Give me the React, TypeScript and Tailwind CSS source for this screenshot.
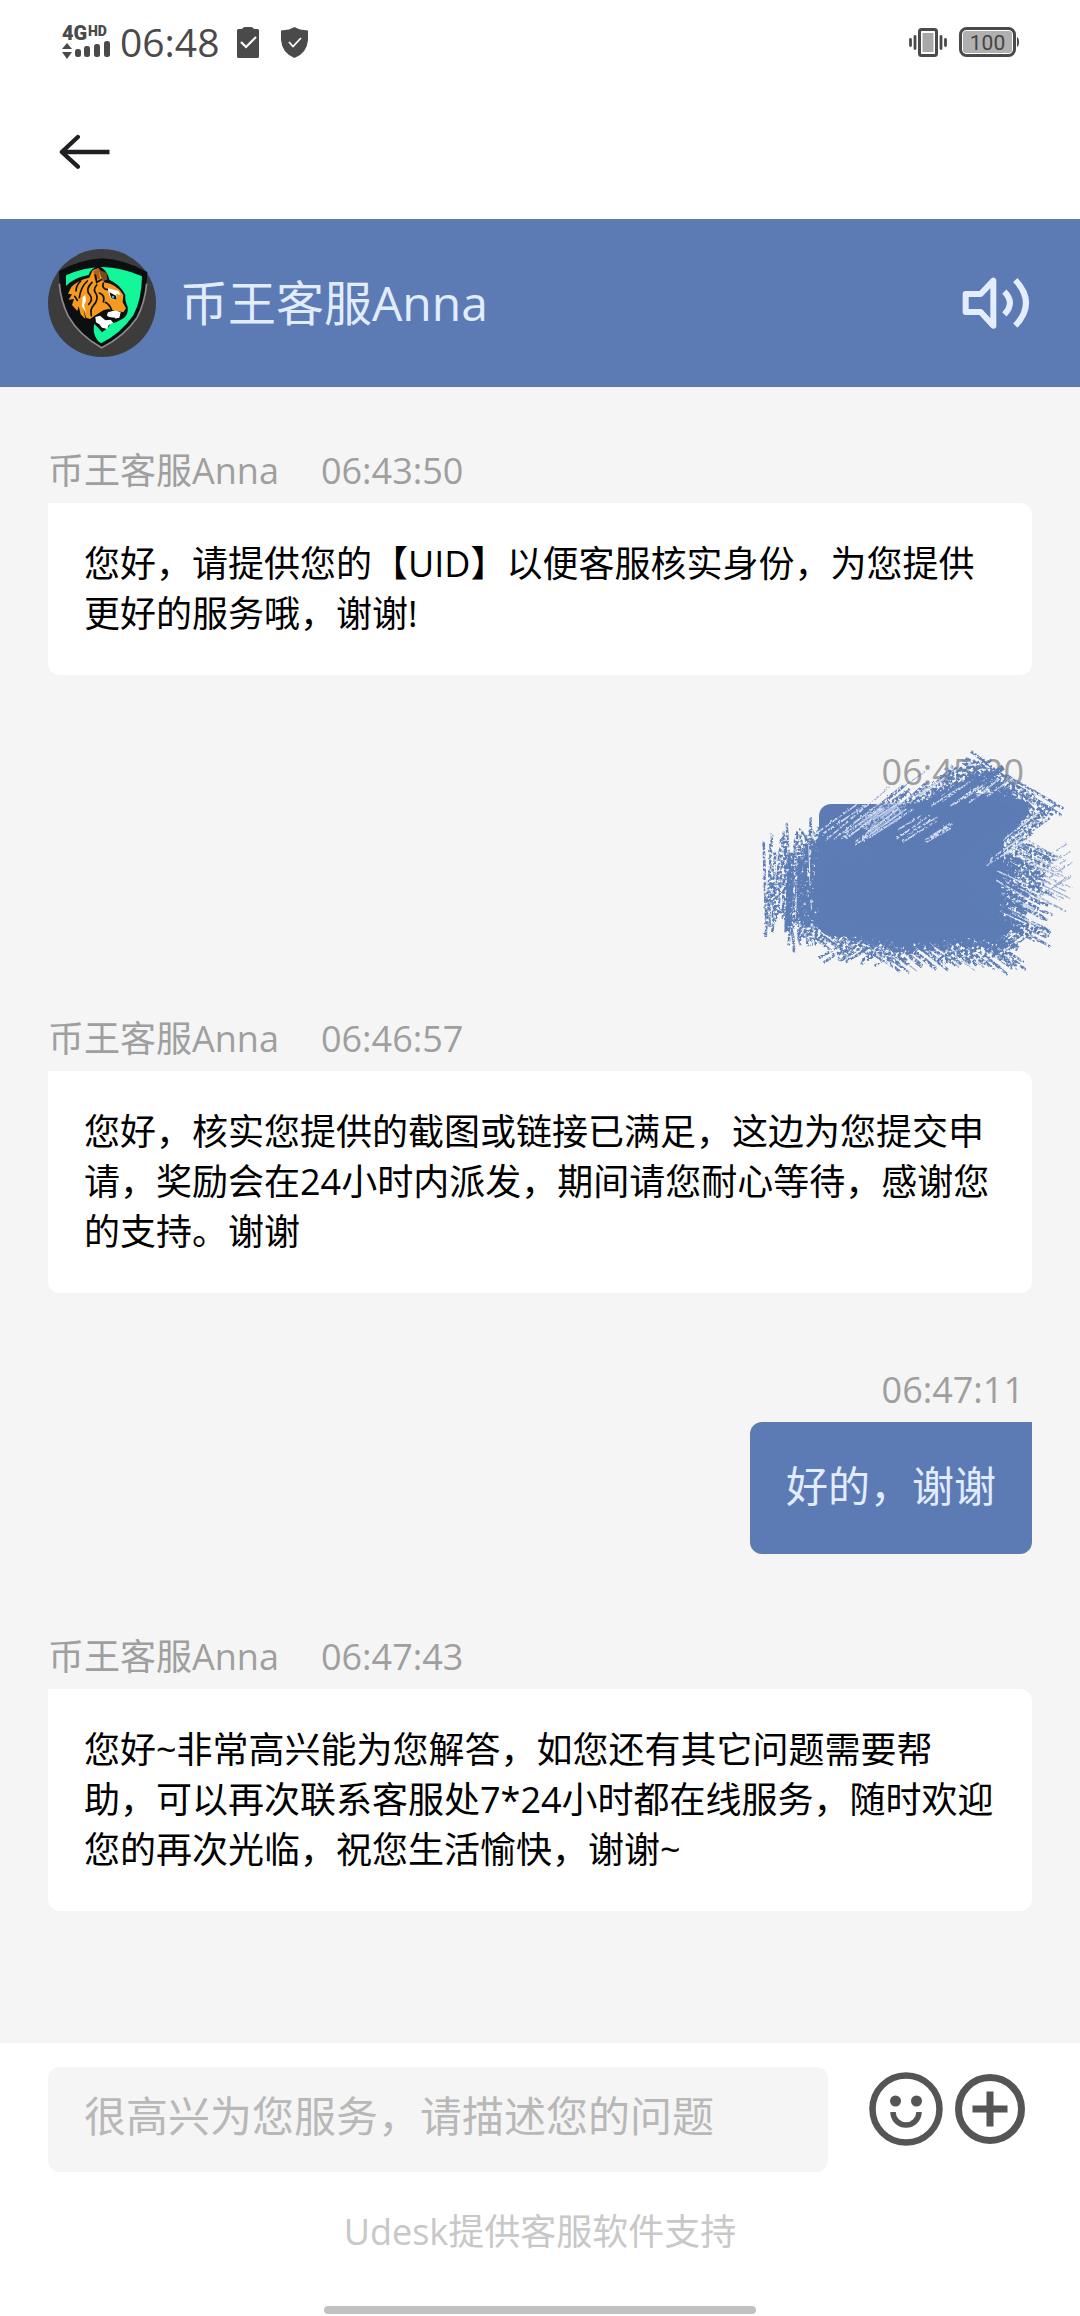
import React from "react";

type Message = { from: "agent" | "user"; time: string; text: string };

const AGENT = "币王客服Anna";

const MESSAGES: Message[] = [
  { from: "agent", time: "06:43:50", text: "您好，请提供您的【UID】以便客服核实身份，为您提供更好的服务哦，谢谢!" },
  { from: "user", time: "06:45:20", text: "" },
  {
    from: "agent",
    time: "06:46:57",
    text: "您好，核实您提供的截图或链接已满足，这边为您提交申请，奖励会在24小时内派发，期间请您耐心等待，感谢您的支持。谢谢",
  },
  { from: "user", time: "06:47:11", text: "好的，谢谢" },
  {
    from: "agent",
    time: "06:47:43",
    text: "您好~非常高兴能为您解答，如您还有其它问题需要帮助，可以再次联系客服处7*24小时都在线服务，随时欢迎您的再次光临，祝您生活愉快，谢谢~",
  },
];

function makeRandom(seed: number) {
  let s = seed;
  return () => {
    s = (s * 16807) % 2147483647;
    return s / 2147483647;
  };
}

type Band = {
  from: [number, number];
  to: [number, number];
  angle: number;
  length: number;
  count: number;
  spread: number;
};

function strokes(bands: Band[], seed: number) {
  const rnd = makeRandom(seed);
  let d = "";
  for (const b of bands) {
    for (let i = 0; i < b.count; i++) {
      const t = (i + rnd() * 0.6) / b.count;
      const cx = b.from[0] + (b.to[0] - b.from[0]) * t + (rnd() - 0.5) * b.spread;
      const cy = b.from[1] + (b.to[1] - b.from[1]) * t + (rnd() - 0.5) * b.spread;
      const a = ((b.angle + (rnd() - 0.5) * 8) * Math.PI) / 180;
      const l = (b.length * (0.7 + rnd() * 0.5)) / 2;
      const dx = Math.cos(a) * l;
      const dy = Math.sin(a) * l;
      d += `M${(cx - dx).toFixed(0)} ${(cy - dy).toFixed(0)}L${(cx + dx).toFixed(0)} ${(cy + dy).toFixed(0)}`;
    }
  }
  return d;
}

const BODY = strokes(
  [
    { from: [150, 480], to: [260, 460], angle: 90, length: 220, count: 12, spread: 20 },
    { from: [560, 230], to: [720, 160], angle: -38, length: 150, count: 16, spread: 20 },
    { from: [760, 160], to: [820, 230], angle: 33, length: 130, count: 8, spread: 20 },
    { from: [790, 290], to: [720, 380], angle: -38, length: 200, count: 12, spread: 20 },
    { from: [760, 360], to: [770, 590], angle: 28, length: 180, count: 20, spread: 20 },
    { from: [220, 580], to: [460, 630], angle: 32, length: 130, count: 18, spread: 16 },
    { from: [460, 630], to: [800, 620], angle: 36, length: 110, count: 22, spread: 16 },
    { from: [230, 370], to: [400, 350], angle: 50, length: 110, count: 14, spread: 16 },
  ],
  512,
);

const EDGE = strokes(
  [
    { from: [330, 290], to: [450, 230], angle: -36, length: 220, count: 9, spread: 24 },
    { from: [450, 260], to: [620, 170], angle: -38, length: 240, count: 18, spread: 30 },
    { from: [600, 170], to: [690, 170], angle: -38, length: 220, count: 14, spread: 30 },
    { from: [800, 140], to: [720, 190], angle: 33, length: 230, count: 14, spread: 20 },
    { from: [880, 185], to: [840, 215], angle: 30, length: 190, count: 5, spread: 24 },
    { from: [850, 280], to: [740, 400], angle: -36, length: 230, count: 26, spread: 30 },
    { from: [820, 330], to: [810, 600], angle: 27, length: 240, count: 40, spread: 30 },
    { from: [790, 420], to: [800, 540], angle: -34, length: 180, count: 14, spread: 40 },
    { from: [76, 460], to: [200, 480], angle: 92, length: 270, count: 18, spread: 24 },
    { from: [140, 480], to: [250, 460], angle: 88, length: 330, count: 14, spread: 30 },
    { from: [210, 350], to: [360, 340], angle: 50, length: 120, count: 16, spread: 20 },
    { from: [170, 590], to: [440, 660], angle: 34, length: 180, count: 26, spread: 26 },
    { from: [300, 650], to: [560, 645], angle: -34, length: 160, count: 18, spread: 24 },
    { from: [420, 655], to: [800, 650], angle: 38, length: 190, count: 28, spread: 26 },
    { from: [640, 650], to: [840, 630], angle: -38, length: 160, count: 16, spread: 20 },
  ],
  77,
);

const FAINT = strokes(
  [
    { from: [380, 220], to: [470, 190], angle: -38, length: 190, count: 6, spread: 30 },
    { from: [890, 350], to: [910, 520], angle: 26, length: 160, count: 16, spread: 30 },
    { from: [930, 370], to: [930, 480], angle: -34, length: 120, count: 9, spread: 30 },
    { from: [400, 680], to: [800, 680], angle: 36, length: 110, count: 10, spread: 20 },
  ],
  901,
);

const GAPS = strokes(
  [
    { from: [290, 270], to: [450, 285], angle: -36, length: 160, count: 13, spread: 16 },
    { from: [510, 280], to: [620, 310], angle: -32, length: 110, count: 9, spread: 30 },
    { from: [800, 370], to: [860, 290], angle: -36, length: 130, count: 5, spread: 24 },
    { from: [560, 190], to: [800, 180], angle: -36, length: 90, count: 10, spread: 40 },
    { from: [810, 440], to: [870, 600], angle: 27, length: 110, count: 8, spread: 30 },
  ],
  313,
);

function Scribble() {
  return (
    <svg
      viewBox="0 0 1020 780"
      className="pointer-events-none absolute -top-[18px] -right-12 h-[260px] w-[340px]"
      aria-hidden="true"
    >
      <defs>
        <filter id="crayon" x="0" y="0" width="1020" height="780" filterUnits="userSpaceOnUse">
          <feTurbulence type="fractalNoise" baseFrequency="0.12" numOctaves="2" seed="4" result="noise" />
          <feColorMatrix in="noise" type="matrix" values="0 0 0 0 0  0 0 0 0 0  0 0 0 0 0  0 0 0 5 -1.75" result="grain" />
          <feDisplacementMap in="SourceGraphic" in2="noise" scale="8" result="rough" />
          <feComposite in="rough" in2="grain" operator="in" />
        </filter>
        <filter id="wax" x="0" y="0" width="1020" height="780" filterUnits="userSpaceOnUse">
          <feTurbulence type="fractalNoise" baseFrequency="0.1" numOctaves="2" seed="9" result="noise" />
          <feColorMatrix in="noise" type="matrix" values="0 0 0 0 0  0 0 0 0 0  0 0 0 0 0  0 0 0 5 -1.2" result="grain" />
          <feComposite in="SourceGraphic" in2="grain" operator="in" />
        </filter>
      </defs>
      <path
        d="M250 350L340 330L420 330L500 250L540 215L640 190L760 190L860 225L870 250L780 330L700 400L715 500L780 560L820 590L800 615L620 630L500 640L340 615L250 570L220 510L225 400Z"
        fill="#5c7bb5"
      />
      <path d={FAINT} stroke="#5c7bb5" strokeWidth="4" strokeOpacity="0.6" filter="url(#crayon)" />
      <path d="M340 275L440 215L500 218L480 270L400 315Z" fill="#c3d2ec" fillOpacity="0.8" />
      <path d={BODY} stroke="#5c7bb5" strokeWidth="16" filter="url(#wax)" />
      <path d={EDGE} stroke="#5c7bb5" strokeWidth="8" filter="url(#crayon)" />
      <path d={GAPS} stroke="#e6eefa" strokeWidth="5" strokeOpacity="0.85" filter="url(#crayon)" />
    </svg>
  );
}

function TigerAvatar() {
  return (
    <svg viewBox="24 26 324 324" className="size-27 shrink-0" role="img" aria-label={AGENT}>
      <circle cx="186" cy="188" r="162" fill="#3c3c3c" />
      <path
        d="M57 92Q120 58 186 54Q255 58 322 95Q320 180 291 232Q252 288 185 322Q118 286 84 226Q57 172 57 92Z"
        fill="#0c0f10"
      />
      <path d="M58 130Q62 180 84 226Q118 286 185 322Q252 288 291 232Q314 190 320 130" fill="none" stroke="#8d8a8f" strokeWidth="5" />
      <path
        d="M78 105Q130 81 186 80Q250 82 306 108Q305 178 280 225Q240 282 183 309Q162 296 160 262L165 225L110 130L78 136Z"
        fill="#12f79a"
      />
      <path
        d="M76 140Q98 112 146 104Q152 84 175 77Q201 86 208 118Q240 132 256 164Q254 180 263 200Q266 226 248 235Q232 246 212 250L204 262L186 276L176 264L162 250L158 296Q112 262 88 215Z"
        fill="#0c0f10"
      />
      <path
        d="M94 140Q112 120 148 112L158 90L174 84L186 96L192 126Q232 132 250 164L248 186L258 204L250 216L222 210L204 206L190 210L164 226L150 236L138 232L130 204L136 236L122 222L116 198L112 212L96 194L102 176L86 178L96 162L84 160Z"
        fill="#f59a1c"
      />
      <path d="M176 88L200 98L202 118L188 122Z" fill="#7a4a1c" />
      <path d="M160 92L176 84L180 116L164 120Z" fill="#b5601a" />
      <path d="M128 170L136 164L138 182L132 194L138 218L126 198Z" fill="#fff" />
      <path d="M204 144L236 152L242 164L228 160L232 178L214 176L206 160Z" fill="#fff" />
      <path d="M208 156L228 166L230 178L214 174Z" fill="#0c0f10" />
      <circle cx="219" cy="170" r="4" fill="#5fa8f0" />
      <path d="M204 216L226 210L242 216L238 232L218 236L200 226Z" fill="#fff" />
      <path d="M166 230L180 226L196 240L212 238L220 248L206 254L202 266L186 262L178 252L168 246Z" fill="#fff" />
      <path d="M180 222L198 236L222 240L226 232L206 230L190 216Z" fill="#0c0f10" />
      <path
        d="M122 122Q108 136 108 152M142 122Q122 140 118 172M156 126Q134 148 150 164Q160 178 146 192M170 134Q158 148 168 160Q178 176 160 196Q150 206 154 226M190 128Q184 144 202 148M178 158Q196 164 190 184M104 168L112 180M166 104L170 126L184 118M196 186Q210 194 214 208"
        fill="none"
        stroke="#0c0f10"
        strokeWidth="5"
        strokeLinecap="round"
      />
    </svg>
  );
}

function StatusBar() {
  return (
    <div className="flex h-21 items-center justify-between pr-[60px] pl-[62px] text-[#4a4a4a]">
      <div className="flex items-center">
        <svg viewBox="0 0 48 40" className="h-10 w-12" fill="currentColor" role="img" aria-label="4G HD">
          <text x="0" y="18" fontSize="20" fontWeight="900" fontFamily="Roboto, sans-serif">4G</text>
          <text x="26" y="14" fontSize="14" fontWeight="900" fontFamily="Roboto, sans-serif">HD</text>
          <path d="M5 21L10 27H0ZM5 37L0 30H10Z" />
          <rect x="13" y="27" width="6" height="8" rx="2.5" />
          <rect x="22" y="24" width="6" height="11" rx="2.5" />
          <rect x="32" y="22" width="6" height="13" rx="2.5" />
          <rect x="42" y="19" width="6" height="16" rx="2.5" />
        </svg>
        <span className="ml-2.5 w-[100px] text-[39px] leading-12 font-medium">06:48</span>
        <svg viewBox="0 0 22 31" className="ml-[17px] h-[31px] w-[22px]" aria-hidden="true">
          <path d="M1.500 2H5Q6 0 8 0H14Q16 0 17 2H20.500Q22 2 22 3.500V29.500Q22 31 20.500 31H1.500Q0 31 0 29.500V3.500Q0 2 1.500 2Z" fill="currentColor" />
          <path d="M4 15L9 20L19 10" fill="none" stroke="#fff" strokeWidth="2.200" />
        </svg>
        <svg viewBox="0 0 27 31" className="ml-[22px] h-[31px] w-[27px]" aria-hidden="true">
          <path d="M13.500 0Q18 3 27 3.500V13Q26 26 13.500 31Q1 26 0 13V3.500Q9 3 13.500 0Z" fill="currentColor" />
          <path d="M8 15L12 19.500L20 11" fill="none" stroke="#fff" strokeWidth="1.800" />
        </svg>
      </div>
      <div className="flex items-center gap-3">
        <svg viewBox="0 0 38 29" className="h-[29px] w-[38px]" aria-hidden="true">
          <rect x="10.500" y="1.500" width="17" height="26" rx="2" fill="#fff" stroke="currentColor" strokeWidth="3" />
          <rect x="13.500" y="5" width="11" height="19" fill="#a8a8a8" />
          <path d="M6 8.500V20.500M32 8.500V20.500M1.500 11.500V17.500M36.500 11.500V17.500" stroke="currentColor" strokeWidth="2.800" strokeLinecap="round" />
        </svg>
        <svg viewBox="0 0 61 30" className="h-[30px] w-[61px]" role="img" aria-label="100%">
          <rect x="1.500" y="1.500" width="54" height="27" rx="6" fill="#fff" stroke="currentColor" strokeWidth="3" />
          <rect x="4" y="4" width="49" height="22" rx="3" fill="#b0b0b0" />
          <path d="M58 10Q60 11 60 15Q60 19 58 20Z" fill="currentColor" />
          <text x="28.500" y="22.500" textAnchor="middle" fontSize="21" fontWeight="400" fill="#444" fontFamily="Roboto, sans-serif">100</text>
        </svg>
      </div>
    </div>
  );
}

function ChatMessage({ message }: { message: Message }) {
  if (message.from === "user") {
    return (
      <li className="relative flex flex-col items-end">
        <time className="mb-2 pr-2 text-4xl leading-12 text-[#9f9f9f]">{message.time}</time>
        {message.text ? (
          <p className="rounded-xl rounded-tr-none bg-[#5c7bb5] px-9 pt-[34px] pb-[38px] text-[42px] leading-[60px] text-[#e2ecff]">
            {message.text}
          </p>
        ) : (
          <>
            <div className="h-33 w-[213px] rounded-xl rounded-tr-none bg-[#5c7bb5] [clip-path:polygon(0_0,88%_0,84%_100%,0_100%)]" />
            <Scribble />
          </>
        )}
      </li>
    );
  }
  return (
    <li className="pt-1.5">
      <div className="mb-2 flex gap-[42px] text-4xl leading-12 text-[#9f9f9f]">
        <span>{AGENT}</span>
        <time>{message.time}</time>
      </div>
      <p className="rounded-xl rounded-tl-none bg-white p-9 text-4xl leading-[50px] text-black">{message.text}</p>
    </li>
  );
}

export default function App() {
  return (
    <div
      lang="zh-CN"
      className="flex min-h-screen flex-col bg-white font-['Open_Sans','Noto_Sans_CJK_SC',sans-serif]"
    >
      <StatusBar />
      <nav className="flex h-[135px] items-center pl-[58px]">
        <button type="button" aria-label="返回">
          <svg viewBox="54 401 158 108" className="h-9 w-[53px]" fill="none" stroke="#1e1f22" strokeWidth="13" aria-hidden="true">
            <path d="M66 455H208" />
            <path d="M113 410L65 455L113 499" strokeLinecap="round" strokeLinejoin="round" />
          </svg>
        </button>
      </nav>
      <header className="flex h-42 items-center bg-[#5c7bb5] px-12">
        <TigerAvatar />
        <h1 className="ml-6 flex-1 text-5xl leading-15 text-[#e2ecff]">{AGENT}</h1>
        <button type="button" aria-label="声音">
          <svg viewBox="98 80 210 156" className="h-13 w-[70px]" fill="none" stroke="#e4edff" strokeWidth="18" aria-hidden="true">
            <path d="M109 131H154L192 91V226L154 185H109Z" strokeLinejoin="round" />
            <path d="M225 124Q259 158 225 192M258 89Q322 158 258 226" />
          </svg>
        </button>
      </header>
      <main className="flex-1 bg-[#f5f5f5] px-12 pt-[54px]">
        <ul className="flex flex-col gap-[73px]">
          {MESSAGES.map((message) => (
            <ChatMessage key={message.time} message={message} />
          ))}
        </ul>
      </main>
      <footer className="bg-white pt-6 pb-0.5">
        <form className="flex items-start pr-[55px] pl-12" onSubmit={(e) => e.preventDefault()}>
          <input
            type="text"
            aria-label="消息"
            placeholder="很高兴为您服务，请描述您的问题"
            className="h-[105px] min-w-0 flex-1 rounded-xl bg-[#f5f5f5] px-9 pb-2 text-[42px] text-[#333] outline-none placeholder:text-[#b8b8b8]"
          />
          <div className="mt-[5px] ml-[41px] flex items-center gap-3 text-[#555]">
            <button type="button" aria-label="表情">
              <svg viewBox="0 0 74 74" className="size-[74px]" fill="none" stroke="currentColor" aria-hidden="true">
                <circle cx="37" cy="37" r="33.500" strokeWidth="6.500" />
                <circle cx="26.500" cy="29" r="5.500" fill="currentColor" stroke="none" />
                <circle cx="47.500" cy="29" r="5.500" fill="currentColor" stroke="none" />
                <path d="M24 40A13 13 0 0 0 50 40" strokeWidth="5.500" />
              </svg>
            </button>
            <button type="button" aria-label="更多">
              <svg viewBox="0 0 70 70" className="size-[70px]" fill="none" stroke="currentColor" strokeWidth="7" aria-hidden="true">
                <circle cx="35" cy="35" r="31.500" />
                <path d="M35 17.500V52.500M17.500 35H52.500" />
              </svg>
            </button>
          </div>
        </form>
        <p className="mt-9 text-center text-4xl leading-12 text-[#c8c8c8]">Udesk提供客服软件支持</p>
        <div className="mx-auto mt-[50px] h-2 w-2/5 rounded-full bg-[#c2c2c2]" />
      </footer>
    </div>
  );
}
